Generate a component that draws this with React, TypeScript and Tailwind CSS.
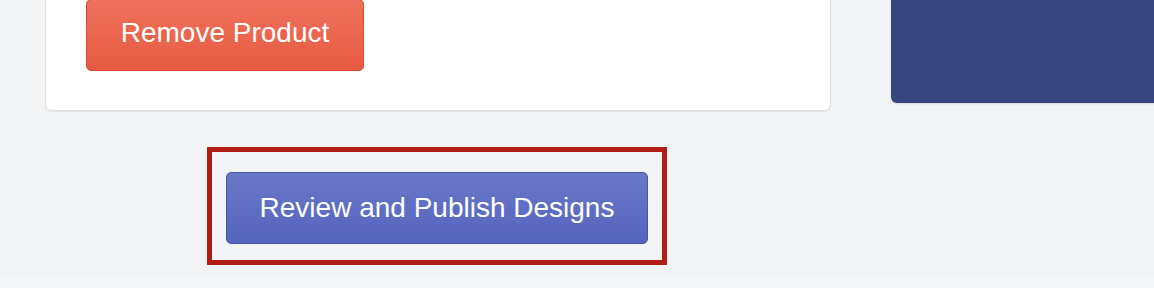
export default function App() {
  return (
    <div className="w-[1154px] h-[288px] overflow-hidden bg-[#f3f4f6] flex flex-col font-['Liberation_Sans',Arial,sans-serif]">
      <div className="flex-1 flex pl-[45px]">
        {/* Left column: product card + publish action */}
        <div className="w-[786px] flex flex-col items-center">
          <div className="w-full -mt-[12px] pt-[10px] pb-[39px] pl-[40px] bg-white border border-[#dfe0e3] rounded-md shadow-[0_1px_1px_rgba(0,0,0,0.06)]">
            <button className="h-[72px] w-[278px] pb-[4px] rounded-[5px] border border-[#e2472f] bg-gradient-to-b from-[#ef715b] to-[#e75b42] text-white text-[28px] leading-none flex items-center justify-center">
              Remove Product
            </button>
          </div>
          <div className="mt-[36px] mr-[2px] w-[460px] border-[5px] border-[#b01d15] pt-[20px] pb-[16px] pl-[14px]">
            <button className="h-[72px] w-[422px] rounded-[5px] border border-[#4553b1] bg-gradient-to-b from-[#6a77c9] to-[#5565bd] text-white text-[28px] leading-none flex items-center justify-center">
              Review and Publish Designs
            </button>
          </div>
        </div>
        {/* Right column: summary panel */}
        <div className="flex-1 ml-[60px] -mr-[20px]">
          <div className="h-[113px] -mt-[10px] bg-[#38467f] rounded-md shadow-[0_1px_2px_rgba(0,0,0,0.12)]" />
        </div>
      </div>
      <div className="h-[12px] bg-[#f5f6f8]" />
    </div>
  );
}
